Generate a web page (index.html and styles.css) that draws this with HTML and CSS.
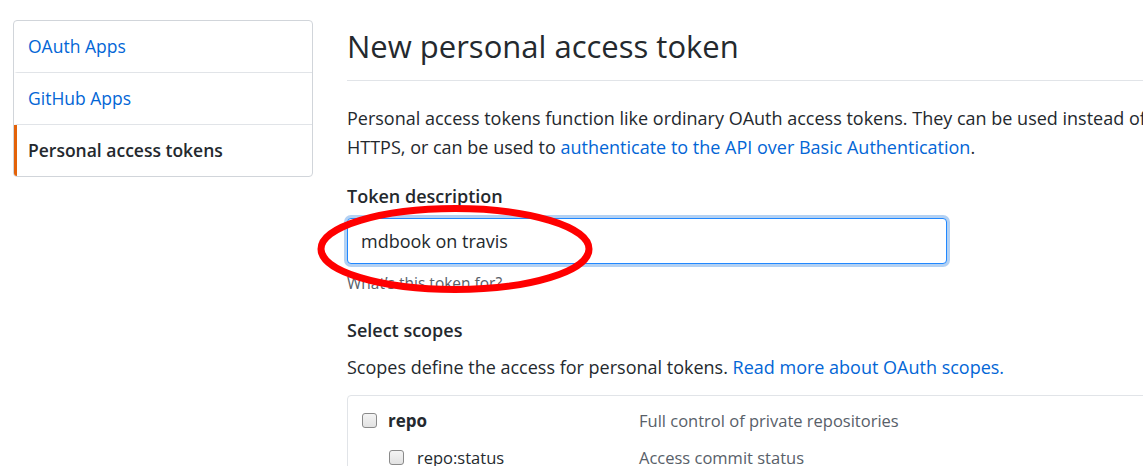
FILE: index.html
```html
<!DOCTYPE html>
<html>
<head>
<meta charset="utf-8">
<link rel="stylesheet" href="styles.css">
</head>
<body>
<div class="page">
  <nav class="menu">
    <a class="menu-item" href="#">OAuth Apps</a>
    <a class="menu-item" href="#">GitHub Apps</a>
    <a class="menu-item selected" href="#">Personal access tokens</a>
  </nav>
  <main class="main">
    <h1 class="title">New personal access token</h1>
    <p class="intro">Personal access tokens function like ordinary OAuth access tokens. They can be used instead of<br>HTTPS, or can be used to <a href="#">authenticate to the API over Basic Authentication</a>.</p>
    <div class="field">
      <label class="field-label">Token description</label>
      <div class="input-wrap">
        <input class="text-input" type="text" value="mdbook on travis">
        <svg class="circle" width="290" height="100" viewBox="0 0 290 100"><ellipse cx="145" cy="50" rx="134" ry="40.5" fill="none" stroke="#ff0000" stroke-width="7"/></svg>
      </div>
      <p class="note">What’s this token for?</p>
    </div>
    <h3 class="field-label scopes-title">Select scopes</h3>
    <p class="scopes-desc">Scopes define the access for personal tokens. <a href="#">Read more about OAuth scopes.</a></p>
    <div class="scopes">
      <div class="scope-row">
        <label class="scope-name parent"><span class="check"></span><strong>repo</strong></label>
        <span class="scope-desc">Full control of private repositories</span>
      </div>
      <div class="scope-row">
        <label class="scope-name child"><span class="check"></span>repo:status</label>
        <span class="scope-desc">Access commit status</span>
      </div>
    </div>
  </main>
</div>
</body>
</html>
```

FILE: styles.css
```css
html, body {
  margin: 0;
  overflow: hidden;
  background: #fff;
}
body {
  font-family: "Open Sans", "Noto Sans", sans-serif;
  font-size: 18px;
  color: #24292e;
}
a { color: #0366d6; text-decoration: none; }
.page {
  display: flex;
  align-items: flex-start;
  gap: 34px;
  padding: 20px 0 0 13px;
}
.menu {
  flex: 0 0 300px;
  box-sizing: border-box;
  border: 1px solid #d1d5da;
  border-radius: 4px;
  display: flex;
  flex-direction: column;
  overflow: hidden;
}
.menu-item {
  display: block;
  height: 51px;
  line-height: 51px;
  border-bottom: 1px solid #e1e4e8;
  border-left: 3px solid transparent;
  padding-left: 11px;
  font-size: 17.5px;
}
.menu-item:last-child { border-bottom: 0; }
.menu-item.selected {
  border-left-color: #e36209;
  color: #24292e;
  font-weight: 600;
}
.main {
  flex: 0 0 1100px;
}
.title {
  margin: 0;
  font-weight: 400;
  font-size: 31px;
  line-height: 52px;
  padding-bottom: 8px;
  border-bottom: 1px solid #e1e4e8;
}
.intro {
  margin: 23px 0 0;
  line-height: 29px;
  white-space: nowrap;
}
.field { margin-top: 21px; }
.field-label {
  display: block;
  font-weight: 600;
  font-size: 18px;
  line-height: 26px;
  margin: 0;
}
.input-wrap {
  position: relative;
  margin-top: 9px;
  width: 600px;
}
.text-input {
  box-sizing: border-box;
  width: 600px;
  height: 46px;
  border: 1px solid #2188ff;
  border-radius: 4px;
  box-shadow: 0 0 0 3px rgba(3, 102, 214, 0.3);
  padding: 0 13px;
  font: inherit;
  color: #24292e;
  outline: none;
}
.circle {
  position: absolute;
  left: -37px;
  top: -19px;
}
.note {
  margin: 9px 0 0;
  font-size: 15.5px;
  color: #586069;
  line-height: 20px;
}
.scopes-title { margin-top: 24px; }
.scopes-desc {
  margin: 11px 0 0;
  line-height: 26px;
}
.scopes {
  margin-top: 15px;
  border: 1px solid #e1e4e8;
  border-radius: 4px;
  padding-top: 6px;
  font-size: 16.5px;
}
.scope-row {
  display: grid;
  grid-template-columns: 291px 1fr;
  height: 37px;
  align-items: center;
}
.scope-name {
  display: flex;
  align-items: center;
  gap: 11px;
}
.scope-name.parent { padding-left: 14px; }
.scope-name.child { padding-left: 41px; gap: 13px; font-weight: 400; }
.scope-name strong { font-weight: 700; font-size: 17px; }
.check {
  width: 15px;
  height: 15px;
  box-sizing: border-box;
  border: 1px solid #8a8a8a;
  border-radius: 3px;
  background: linear-gradient(#f4f4f4, #e2e2e2);
}
.scope-desc {
  color: #586069;
}
```
